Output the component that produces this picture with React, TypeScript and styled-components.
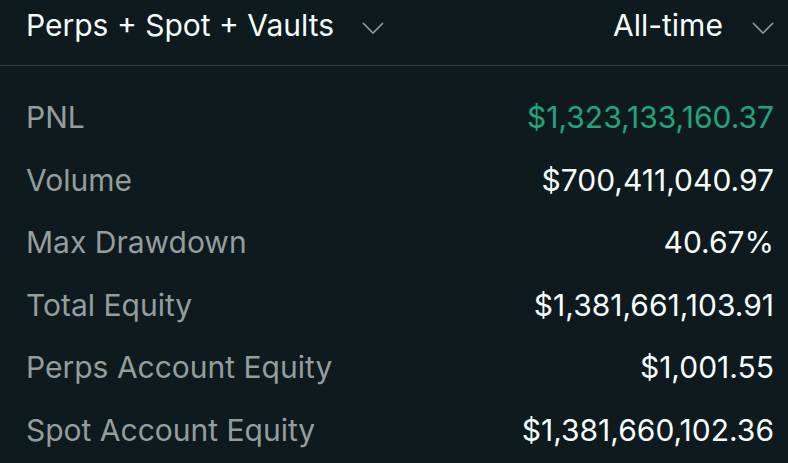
import React from "react";
import styled, { createGlobalStyle } from "styled-components";

interface IStat {
  label: string;
  value: string;
  positive?: boolean;
}

const stats: IStat[] = [
  { label: "PNL", value: "$1,323,133,160.37", positive: true },
  { label: "Volume", value: "$700,411,040.97" },
  { label: "Max Drawdown", value: "40.67%" },
  { label: "Total Equity", value: "$1,381,661,103.91" },
  { label: "Perps Account Equity", value: "$1,001.55" },
  { label: "Spot Account Equity", value: "$1,381,660,102.36" },
];

const Chevron = () => (
  <ChevronSvg viewBox="0 0 22 12" fill="none">
    <path d="M1 1l10 10L21 1" stroke="#949e9c" strokeWidth="1.6" />
  </ChevronSvg>
);

const App = () => {
  return (
    <>
      <GlobalStyle />
      <Panel>
        <Header>
          <LeftSelect>
            <SelectLabel>Perps + Spot + Vaults</SelectLabel>
            <Chevron />
          </LeftSelect>
          <RightSelect>
            <SelectLabel>All-time</SelectLabel>
            <Chevron />
          </RightSelect>
        </Header>
        <StatList>
          {stats.map((s) => (
            <StatRow key={s.label}>
              <StatLabel>{s.label}</StatLabel>
              <StatValue $positive={s.positive}>{s.value}</StatValue>
            </StatRow>
          ))}
        </StatList>
      </Panel>
    </>
  );
};

export default App;

const GlobalStyle = createGlobalStyle`
  html, body {
    margin: 0;
    background: #0f1a1f;
  }
  body {
    font-family: Inter, "Noto Sans", sans-serif;
  }
`;

const Panel = styled.div`
  width: 788px;
  height: 463px;
  background: #0f1a1f;
  overflow: hidden;
`;

const Header = styled.div`
  display: flex;
  justify-content: space-between;
  height: 66px;
  border-bottom: 1px solid #3a3d3f;
  box-sizing: border-box;
`;

const LeftSelect = styled.div`
  width: 385px;
  box-sizing: border-box;
  padding: 7px 1px 0 26px;
  display: flex;
  justify-content: space-between;
  align-items: flex-start;
`;

const RightSelect = styled.div`
  width: 175px;
  box-sizing: border-box;
  padding: 7px 14px 0 0;
  display: flex;
  justify-content: space-between;
  align-items: flex-start;
`;

const SelectLabel = styled.span`
  color: #f6fefd;
  font-size: 30px;
  line-height: 36px;
`;

const ChevronSvg = styled.svg`
  width: 22px;
  height: 12px;
  margin-top: 15px;
`;

const StatList = styled.div`
  display: flex;
  flex-direction: column;
  padding: 20px 14px 0 26px;
`;

const StatRow = styled.div`
  display: flex;
  justify-content: space-between;
  align-items: center;
  height: 62.5px;
  font-size: 30px;
`;

const StatLabel = styled.span`
  color: #949e9c;
`;

const StatValue = styled.span<{ $positive?: boolean }>`
  color: ${(p) => (p.$positive ? "#1fa67d" : "#f6fefd")};
`;
